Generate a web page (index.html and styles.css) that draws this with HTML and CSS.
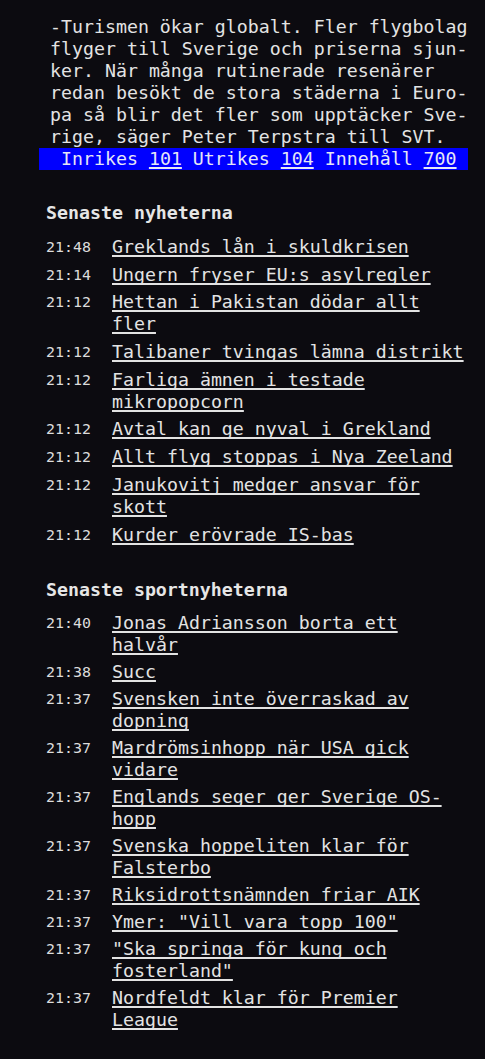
FILE: index.html
```html
<!DOCTYPE html>
<html lang="sv">
<head>
<meta charset="utf-8">
<title>Text-TV</title>
<link rel="stylesheet" href="styles.css">
</head>
<body>
<main class="page">
  <section class="teletext">
    <p class="article">-Turismen ökar globalt. Fler flygbolag<br>flyger till Sverige och priserna sjun-<br>ker. När många rutinerade resenärer<br>redan besökt de stora städerna i Euro-<br>pa så blir det fler som upptäcker Sve-<br>rige, säger Peter Terpstra till SVT.</p>
    <nav class="navbar">Inrikes <a href="#">101</a> Utrikes <a href="#">104</a> Innehåll <a href="#">700</a></nav>
  </section>

  <section class="news">
    <h2 class="news-title">Senaste nyheterna</h2>
    <ul class="list list--news">
      <li class="item"><span class="time">21:48</span><a class="link" href="#">Greklands lån i skuldkrisen</a></li>
      <li class="item"><span class="time">21:14</span><a class="link" href="#">Ungern fryser EU:s asylregler</a></li>
      <li class="item"><span class="time">21:12</span><a class="link" href="#">Hettan i Pakistan dödar allt fler</a></li>
      <li class="item"><span class="time">21:12</span><a class="link" href="#">Talibaner tvingas lämna distrikt</a></li>
      <li class="item"><span class="time">21:12</span><a class="link" href="#">Farliga ämnen i testade mikropopcorn</a></li>
      <li class="item"><span class="time">21:12</span><a class="link" href="#">Avtal kan ge nyval i Grekland</a></li>
      <li class="item"><span class="time">21:12</span><a class="link" href="#">Allt flyg stoppas i Nya Zeeland</a></li>
      <li class="item"><span class="time">21:12</span><a class="link" href="#">Janukovitj medger ansvar för skott</a></li>
      <li class="item"><span class="time">21:12</span><a class="link" href="#">Kurder erövrade IS-bas</a></li>
    </ul>
  </section>

  <section class="news news--sport">
    <h2 class="news-title">Senaste sportnyheterna</h2>
    <ul class="list">
      <li class="item"><span class="time">21:40</span><a class="link" href="#">Jonas Adriansson borta ett halvår</a></li>
      <li class="item"><span class="time">21:38</span><a class="link" href="#">Succ</a></li>
      <li class="item"><span class="time">21:37</span><a class="link" href="#">Svensken inte överraskad av dopning</a></li>
      <li class="item"><span class="time">21:37</span><a class="link" href="#">Mardrömsinhopp när USA gick vidare</a></li>
      <li class="item"><span class="time">21:37</span><a class="link" href="#">Englands seger ger Sverige OS-hopp</a></li>
      <li class="item"><span class="time">21:37</span><a class="link" href="#">Svenska hoppeliten klar för Falsterbo</a></li>
      <li class="item"><span class="time">21:37</span><a class="link" href="#">Riksidrottsnämnden friar AIK</a></li>
      <li class="item"><span class="time">21:37</span><a class="link" href="#">Ymer: "Vill vara topp 100"</a></li>
      <li class="item"><span class="time">21:37</span><a class="link" href="#">"Ska springa för kung och fosterland"</a></li>
      <li class="item"><span class="time">21:37</span><a class="link" href="#">Nordfeldt klar för Premier League</a></li>
    </ul>
  </section>
</main>
</body>
</html>
```

FILE: styles.css
```css
html, body {
  margin: 0;
  padding: 0;
  background: #0c0b10;
}

body {
  color: #e3e3e3;
  font-family: "DejaVu Sans Mono", "Liberation Mono", monospace;
  font-size: 18.25px;
  line-height: 22px;
}

.page {
  padding: 16px 17px 0 0;
  height: 1043px;
  overflow: hidden;
}

a {
  color: inherit;
  text-decoration: underline;
  text-decoration-thickness: 2px;
  text-underline-offset: 2px;
  text-decoration-skip-ink: none;
}

.teletext {
  margin-left: 39px;
  width: 429px;
}

.article {
  margin: 0;
  padding-left: 11px;
  white-space: nowrap;
}

.navbar {
  display: block;
  background: #0000ff;
  color: #e6e6f6;
  padding-left: 22px;
  height: 22px;
  white-space: nowrap;
}

.news {
  margin: 32px 0 0 46px;
}

.news--sport {
  margin-top: 33px;
}

.news-title {
  margin: 0 0 12px;
  font-size: 18.25px;
  line-height: 22px;
  font-weight: bold;
  color: #e6e6e6;
}

.news--sport .news-title {
  margin-bottom: 11px;
}

.list {
  list-style: none;
  margin: 0;
  padding: 0;
  display: flex;
  flex-direction: column;
  gap: 5px;
}

.list--news {
  gap: 5.7px;
}

.item {
  display: flex;
  align-items: baseline;
}

.time {
  flex: 0 0 66px;
  font-size: 14.95px;
  line-height: 1;
  color: #dcdcdc;
  position: relative;
  top: -1px;
}

.link {
  width: 356px;
}
```
